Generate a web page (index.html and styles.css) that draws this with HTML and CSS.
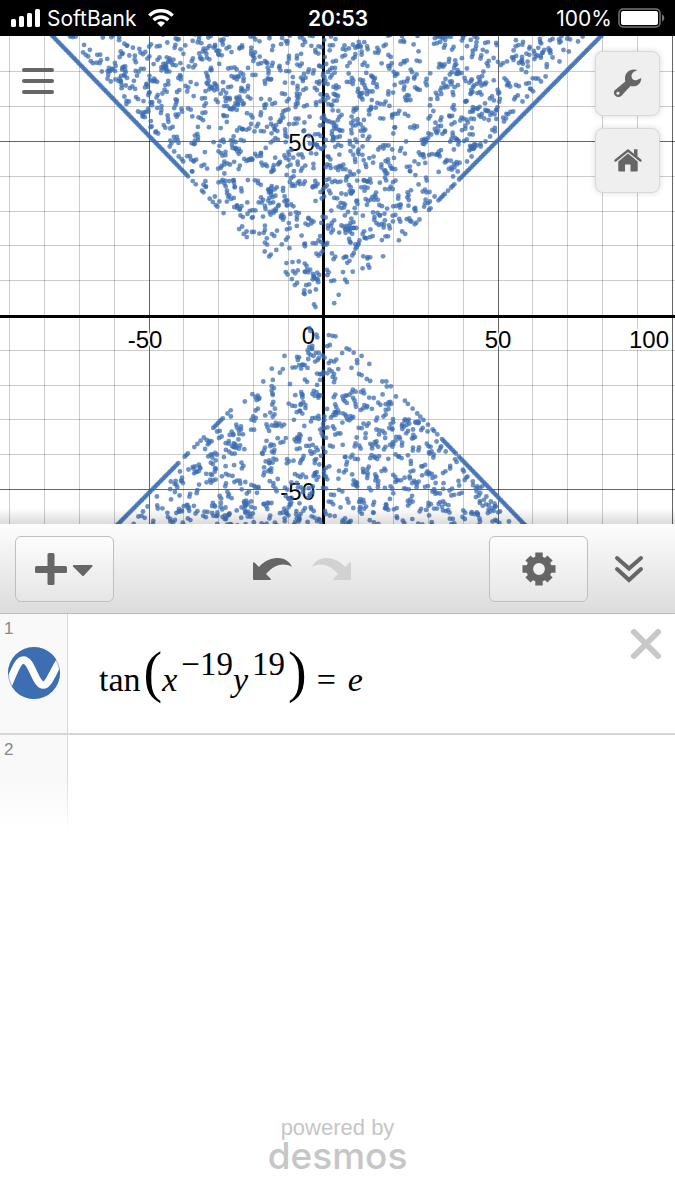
FILE: index.html
```html
<!DOCTYPE html>
<html lang="en">
<head>
  <meta charset="UTF-8">
  <meta name="viewport" content="width=device-width, initial-scale=1.0">
  <title>Desmos Graphing Calculator</title>
  <link rel="stylesheet" href="styles.css">
</head>
<body>
  <header class="status">
    <div class="carrier">
      <svg width="30" height="18" viewBox="0 0 30 18" fill="#fff" aria-hidden="true">
        <rect x="0" y="10" width="5" height="8" rx="1.5"/>
        <rect x="8" y="7" width="5" height="11" rx="1.5"/>
        <rect x="16" y="4" width="5" height="14" rx="1.5"/>
        <rect x="24" y="0" width="5" height="18" rx="1.5"/>
      </svg>
      <span>SoftBank</span>
      <svg width="26" height="18" viewBox="0 0 26 18" fill="none" stroke="#fff" stroke-width="3.4" aria-hidden="true">
        <path d="M1.3 6.6a16.6 16.6 0 0 1 23.4 0"/>
        <path d="M5.6 11a10.5 10.5 0 0 1 14.8 0"/>
        <path d="M13 18l-4-4a5.7 5.7 0 0 1 8 0z" fill="#fff" stroke="none"/>
      </svg>
    </div>
    <div class="clock">20:53</div>
    <div class="battery">
      <span>100%</span>
      <svg width="47" height="20" viewBox="0 0 47 20" aria-hidden="true">
        <rect x="1" y="1" width="41" height="18" rx="4" fill="none" stroke="#777" stroke-width="1.5"/>
        <rect x="3" y="3" width="37" height="14" rx="2" fill="#fff"/>
        <path d="M44 6.500c3 1 3 6 0 7z" fill="#777"/>
      </svg>
    </div>
  </header>

  <main class="calculator">
    <section class="graph">
      <svg class="plot" id="plot" viewBox="0 0 675 488" role="img" aria-label="Graph">
        <g id="grid"></g>
        <g class="labels">
          <text x="315" y="115" text-anchor="end">50</text>
          <text x="315" y="464" text-anchor="end">-50</text>
          <text x="145" y="312" text-anchor="middle">-50</text>
          <text x="315" y="308" text-anchor="end">0</text>
          <text x="498" y="312" text-anchor="middle">50</text>
          <text x="669" y="312" text-anchor="end">100</text>
        </g>
        <g id="dots" class="dots"></g>
      </svg>
      <button class="menu" aria-label="Menu">
        <svg width="32" height="28" viewBox="0 0 32 28" stroke="#666" stroke-width="4" stroke-linecap="round" aria-hidden="true">
          <path d="M2 3H30M2 14H30M2 25H30"/>
        </svg>
      </button>
      <div class="tools">
        <button class="tool" aria-label="Graph settings">
          <svg width="29" height="29" viewBox="0 0 29 29" aria-hidden="true">
            <path fill="#666" fill-rule="evenodd" d="M24.500 1C22 2 18.500 4 18.500 7C18.500 10.500 21.500 12 24 11L28.200 9C28.500 14.500 24 18.500 17.500 17L8 27.300C4.500 30-1 25.500 1.500 21.500L12.300 12.500C10.500 5 16-1.500 24.500 1zM4.900 22.700a1.600 1.600 0 1 0 .1 0z"/>
          </svg>
        </button>
        <button class="tool" aria-label="Default view">
          <svg width="28" height="23" viewBox="0 0 28 23" fill="#666" aria-hidden="true">
            <path d="M1.500 11.500L14 1.500L26.500 11.500" fill="none" stroke="#666" stroke-width="2.300" stroke-linecap="round"/>
            <path d="M20 .3H23.500V8L20 5zM14 4.500L4.300 12.500V21.500Q4.300 22.500 5.500 22.500H11V15.500H16.500V22.500H22.500Q23.700 22.500 23.700 21.500V12.500z"/>
          </svg>
        </button>
      </div>
    </section>

    <nav class="toolbar">
      <button class="raised" aria-label="Add item">
        <svg width="60" height="34" viewBox="0 0 60 34" fill="#666" aria-hidden="true">
          <rect x="0" y="14" width="32" height="7" rx="1.500"/>
          <rect x="12.500" y="1" width="7" height="32" rx="1.500"/>
          <path d="M38.500 13H57Q58 13.500 57.300 14.500L49 23.500Q48 24.500 47 23.500L38 14.500Q37.500 13.500 38.500 13z"/>
        </svg>
      </button>
      <div class="history">
        <button class="plain" aria-label="Undo">
          <svg width="39" height="22" viewBox="0 0 39 22" fill="#666" aria-hidden="true">
            <path d="M1.500 4.500L6 9C12 2 19 0 25 0C32 0 37 4 39 9C31 4.500 22 6 13 16L18 21Q18 22 17 22H1Q0 22 0 21V5Q.5 4 1.500 4.500z"/>
          </svg>
        </button>
        <button class="plain" aria-label="Redo" disabled>
          <svg width="39" height="22" viewBox="0 0 39 22" fill="#d2d2d2" aria-hidden="true">
            <path transform="matrix(-1 0 0 1 39 0)" d="M1.500 4.500L6 9C12 2 19 0 25 0C32 0 37 4 39 9C31 4.500 22 6 13 16L18 21Q18 22 17 22H1Q0 22 0 21V5Q.5 4 1.500 4.500z"/>
          </svg>
        </button>
      </div>
      <div class="actions">
        <button class="raised" aria-label="Edit list">
          <svg width="34" height="34" viewBox="-17 -17 34 34" fill="none" stroke="#666" aria-hidden="true">
            <circle r="9.300" stroke-width="6.800"/>
            <path stroke-width="7.400" d="M0-16.500V-9M0 16.500V9M-16.500 0H-9M16.500 0H9M-11-11L-7-7M11-11L7-7M-11 11L-7 7M11 11L7 7"/>
          </svg>
        </button>
        <button class="plain hide" aria-label="Hide list">
          <svg width="30" height="28" viewBox="0 0 30 28" fill="none" stroke="#666" stroke-width="4" stroke-linecap="round" aria-hidden="true">
            <path d="M3 3L15 13.500L27 3M3 14L15 25L27 14"/>
          </svg>
        </button>
      </div>
    </nav>

    <ol class="expressions">
      <li class="row">
        <div class="gutter">
          <span class="number">1</span>
          <button class="plain" aria-label="Hide curve">
            <svg width="52" height="52" viewBox="0 0 52 52" aria-hidden="true">
              <clipPath id="disc"><circle cx="26" cy="26" r="26"/></clipPath>
              <g clip-path="url(#disc)">
                <rect width="52" height="52" fill="#3d6db3"/>
                <path d="M0 39C7 22 10 13 15.500 13C24 13 27 38 35.500 38C41 38 45 24 53 12" fill="none" stroke="#fff" stroke-width="7.500"/>
              </g>
              <circle cx="26" cy="26" r="25.500" fill="none" stroke="#3d6db3" stroke-opacity=".4"/>
            </svg>
          </button>
        </div>
        <div class="math"><span>tan</span><span class="paren">(</span><i>x</i><sup>−19</sup><i>y</i><sup>19</sup><span class="paren">)</span><span class="equals">=</span><i>e</i></div>
        <button class="plain close" aria-label="Delete expression">
          <svg width="32" height="32" viewBox="0 0 32 32" stroke="#c8c8c8" stroke-width="6" stroke-linecap="round" aria-hidden="true">
            <path d="M4 4L28 28M28 4L4 28"/>
          </svg>
        </button>
      </li>
      <li class="row blank">
        <div class="gutter"><span class="number">2</span></div>
      </li>
    </ol>

    <footer class="brand">
      <span>powered by</span>
      <a href="#">desmos</a>
    </footer>
  </main>

  <script src="graph.js"></script>
</body>
</html>
```

FILE: styles.css
```css
* {
  box-sizing: border-box;
}
body {
  margin: 0;
  min-height: 100vh;
  display: flex;
  flex-direction: column;
  font-family: "Liberation Sans", Arial, sans-serif;
  background: #fff;
}
button {
  display: flex;
  align-items: center;
  justify-content: center;
  padding: 0;
  border: none;
  background: none;
  cursor: pointer;
}
svg {
  display: block;
}

/* status bar */
.status {
  display: grid;
  grid-template-columns: 1fr auto 1fr;
  align-items: center;
  height: 36px;
  padding: 0 10px 0 11px;
  background: #000;
  color: #fff;
  font-family: Inter, sans-serif;
  font-size: 21px;
}
.carrier,
.battery {
  display: flex;
  align-items: center;
  gap: 6px;
}
.carrier svg:last-child {
  margin-left: 6px;
}
.battery {
  justify-content: flex-end;
}
.clock {
  font-weight: 600;
}

/* graph */
.calculator {
  flex: 1;
  display: flex;
  flex-direction: column;
}
.graph {
  position: relative;
}
.graph::after {
  content: "";
  position: absolute;
  left: 0;
  right: 0;
  bottom: 0;
  height: 16px;
  background: linear-gradient(rgba(0,0,0,0), rgba(0,0,0,0.14));
}
.plot {
  width: 100%;
  height: auto;
}
.minor {
  stroke: #000;
  stroke-opacity: 0.2;
}
.major {
  stroke: #000;
  stroke-opacity: 0.6;
}
.axis {
  stroke: #000;
  stroke-width: 3;
}
.labels {
  font-size: 24px;
  stroke: #fff;
  stroke-width: 3px;
  paint-order: stroke;
}
.dots {
  fill: #3a6cb4;
  fill-opacity: 0.74;
}
.menu {
  position: absolute;
  top: 31px;
  left: 22px;
}
.tools {
  position: absolute;
  top: 15px;
  right: 15px;
  display: grid;
  gap: 12px;
}
.tool {
  width: 65px;
  height: 65px;
  background: #efefef;
  border: 1px solid #d8d8d8;
  border-radius: 8px;
  box-shadow: 0 0 6px rgba(0,0,0,0.15);
}

/* toolbar */
.toolbar {
  display: flex;
  align-items: center;
  justify-content: space-between;
  height: 90px;
  padding: 0 15px;
  background: linear-gradient(#fdfdfd, #dcdcdc);
  border-bottom: 1px solid #bbb;
}
.raised {
  width: 99px;
  height: 66px;
  border: 1px solid #bfbfbf;
  border-radius: 6px;
  background: linear-gradient(#fdfdfd, #e6e6e6);
}
.history {
  display: flex;
  gap: 20px;
}
.actions {
  display: flex;
  gap: 10px;
}
.hide {
  width: 62px;
}

/* expression list */
.expressions {
  list-style: none;
  margin: 0;
  padding: 0;
}
.row {
  display: flex;
  height: 121px;
  border-bottom: 2px solid #d6d6d6;
}
.gutter {
  display: flex;
  flex-direction: column;
  align-items: center;
  gap: 8px;
  width: 68px;
  background: #f9f9f9;
  border-right: 1px solid #d8d8d8;
}
.number {
  align-self: flex-start;
  padding: 5px 4px 0;
  color: #888;
  font-size: 17px;
  line-height: 20px;
}
.math {
  flex: 1;
  display: flex;
  align-items: baseline;
  padding: 30px 0 0 31px;
  font-family: "Liberation Serif", "Times New Roman", serif;
  font-size: 34px;
  line-height: 56px;
}
.math sup {
  position: relative;
  top: -16px;
  padding-left: 4px;
  font-size: 33px;
  line-height: 1;
}
.paren {
  padding-left: 3px;
  font-size: 56px;
}
.equals {
  padding: 0 12px 0 10px;
}
.close {
  align-self: flex-start;
  margin: 14px 13px 0 0;
}
.blank {
  border-bottom: none;
}
.blank .gutter {
  height: 96px;
  border-image: linear-gradient(#d8d8d8 40%, #fff) 1;
  background: linear-gradient(#f9f9f9 50%, #fff);
}

.brand {
  margin-top: auto;
  padding-bottom: 28px;
  display: flex;
  flex-direction: column;
  align-items: center;
  color: #c6c6c6;
  font-size: 22px;
  line-height: 24px;
}
.brand a {
  color: #c6c6c6;
  font-family: Inter, sans-serif;
  font-size: 37px;
  font-weight: 500;
  line-height: 32px;
  text-decoration: none;
}
```

FILE: graph.js
```js
const NS = "http://www.w3.org/2000/svg";
const WIDTH = 675, HEIGHT = 488;
const originX = 323.5, originY = 280.5;
const unitX = 34.9, unitY = 34.8; // pixels per 10 units

const grid = document.getElementById("grid");
const dots = document.getElementById("dots");

function line(x1, y1, x2, y2, cls) {
  const el = document.createElementNS(NS, "line");
  el.setAttribute("x1", x1);
  el.setAttribute("y1", y1);
  el.setAttribute("x2", x2);
  el.setAttribute("y2", y2);
  el.setAttribute("class", cls);
  grid.appendChild(el);
}

function kind(i) {
  return i % 5 === 0 ? "major" : "minor";
}

for (let i = -9; i <= 10; i++) {
  const x = Math.floor(originX + i * unitX) + 0.5;
  line(x, 0, x, HEIGHT, kind(i));
}
for (let i = -5; i <= 7; i++) {
  const y = Math.floor(originY - i * unitY) - 0.5;
  line(0, y, WIDTH, y, kind(i));
}
line(originX, 0, originX, HEIGHT, "axis");
line(0, originY, WIDTH, originY, "axis");

// small seeded generator so the curve samples stay the same on each load
let seed = 19;
function random() {
  seed = (seed + 0x6D2B79F5) | 0;
  let t = Math.imul(seed ^ (seed >>> 15), 1 | seed);
  t = (t + Math.imul(t ^ (t >>> 7), 61 | t)) ^ t;
  return ((t ^ (t >>> 14)) >>> 0) / 4294967296;
}

function dot(x, y) {
  if (y < -2 || y > HEIGHT + 2) return;
  const el = document.createElementNS(NS, "circle");
  el.setAttribute("cx", x.toFixed(1));
  el.setAttribute("cy", y.toFixed(1));
  el.setAttribute("r", 2.4);
  dots.appendChild(el);
}

// tan((y/x)^19) = e has its outermost branches at these slopes
const positive = Math.pow(Math.atan(Math.E), 1 / 19);
const negative = Math.pow(Math.PI - Math.atan(Math.E), 1 / 19);

function branch(sx, sy, slope) {
  for (let d = 25; d < 290; d += 1.6) {
    const chance = d > 145 ? 1 : Math.pow(d / 145, 2) * 0.7;
    if (random() < chance) {
      dot(originX + sx * d / slope, originY + sy * d);
    }
  }
  // the next branch in is sampled more sparsely
  for (let d = 60; d < 290; d += 5) {
    if (random() < 0.45) {
      dot(originX + sx * d / (slope + 0.07), originY + sy * d);
    }
  }
}
branch(1, -1, positive);
branch(-1, 1, positive);
branch(-1, -1, negative);
branch(1, 1, negative);

function scatter(sy, depth, count) {
  for (let i = 0; i < count; i++) {
    const d = 8 + Math.sqrt(random()) * (depth - 8);
    const x = originX + (random() * 2 - 1) * d / 1.09;
    const y = originY + sy * d;
    dot(x, y);
    if (random() < 0.45) {
      const turn = random() * Math.PI * 2;
      dot(x + Math.cos(turn) * 3, y + Math.sin(turn) * 3);
    }
  }
}
scatter(-1, 283, 1150);
scatter(1, 210, 620);
```
